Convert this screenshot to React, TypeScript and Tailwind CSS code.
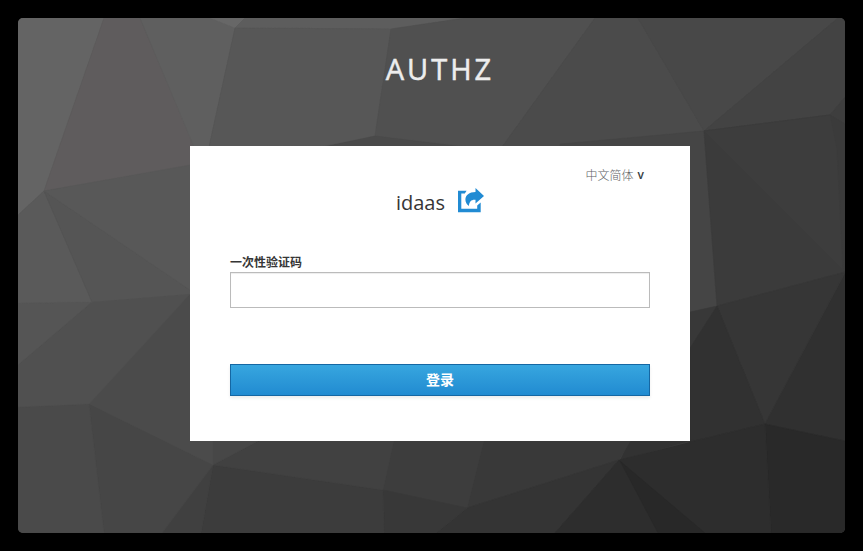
const facets: [string, string][] = [
  ["18,18 104,18 44,191 18,215", "#646464"],
  ["104,18 140,18 194,146 190,166 44,191", "#5f5c5d"],
  ["140,18 210,18 235,28 209,147 194,147", "#5f5f5f"],
  ["210,18 245,18 235,28", "#676767"],
  ["245,18 465,18 391,29 235,28", "#5d5d5d"],
  ["235,28 391,29 375,136 325,146 209,147", "#575757"],
  ["391,29 465,18 595,18 502,147 470,147 375,136", "#505050"],
  ["375,136 460,147 325,147", "#4a4a4a"],
  ["595,18 638,18 704,131 560,147 502,147", "#4b4b4b"],
  ["638,18 838,18 704,131", "#484848"],
  ["838,18 845,18 845,97 830,115 704,131", "#434343"],
  ["845,97 845,124 830,115", "#3e3e3e"],
  ["560,147 560,144 704,131 717,306 690,312 690,147", "#454545"],
  ["704,131 830,115 845,124 845,272 717,306", "#3b3b3b"],
  ["704,131 830,115 837,150 843,270", "#3d3d3d"],
  ["690,312 717,306 690,348", "#383838"],
  ["717,306 845,272 765,424", "#363636"],
  ["690,348 717,306 765,424 690,442", "#313131"],
  ["845,273 845,441 765,424", "#303030"],
  ["765,424 845,441 845,533 771,533", "#292929"],
  ["630,440 694,440 620,460", "#323232"],
  ["484,440 631,440 619,460 467,508", "#393939"],
  ["467,508 619,460 555,533 436,533", "#343434"],
  ["619,460 690,442 765,424 771,533 555,533", "#2d2d2d"],
  ["620,461 705,533 658,533", "#282828"],
  ["394,440 484,440 467,508 383,490", "#3d3d3d"],
  ["383,490 467,508 436,533 384,533", "#383838"],
  ["213,465 383,490 384,533 201,533", "#3c3c3c"],
  ["213,465 260,440 394,440 383,490", "#414141"],
  ["213,465 201,533 162,533", "#404040"],
  ["190,440 260,440 213,465", "#474747"],
  ["89,404 213,465 162,533 104,533", "#464646"],
  ["18,407 89,404 104,533 18,533", "#4a4a4a"],
  ["89,404 118,370 190,294 213,440 213,465", "#4b4b4b"],
  ["92,302 190,294 89,404 18,407 18,365", "#505050"],
  ["18,303 92,302 18,365", "#555555"],
  ["18,215 44,191 92,302 18,303", "#5a5a5a"],
  ["44,191 190,290 190,294 92,302", "#555555"],
  ["44,191 190,165 190,290", "#585858"],
];

function Backdrop() {
  return (
    <svg className="absolute inset-0 h-full w-full" viewBox="18 18 827 515" aria-hidden="true">
      {facets.map(([points, fill]) => (
        <polygon key={points} points={points} fill={fill} stroke={fill} strokeWidth="0.5" />
      ))}
    </svg>
  );
}

function ShareIcon() {
  return (
    <svg className="h-[25px] w-[26px]" viewBox="0 0 26 25" fill="#218bd3" aria-hidden="true">
      <path d="M0 2.8H8.6L6.8 5.6H3.3V20.8H19.2V17.4L22.7 14.4V24.2H0Z" />
      <path d="M17.5 0 26 7.9 17.5 15.6V11.7C13.5 11.3 11.3 13.2 10.9 18 8.8 16.4 7.4 14.1 7.4 11.7 7.4 7.3 11.2 4.1 17.5 4.1Z" />
    </svg>
  );
}

export default function App() {
  return (
    <div className="h-[551px] w-[863px] bg-black p-[18px] font-['Open_Sans','Noto_Sans_CJK_SC',sans-serif]">
      <main className="relative h-[515px] overflow-hidden rounded-[5px] bg-[#484848]">
        <Backdrop />
        <div className="relative flex flex-col pl-[172px]">
          <h1 className="flex h-32 w-[500px] justify-center pt-[31px] text-[29px] leading-[40px] tracking-[3px] text-[#ededed] [-webkit-text-stroke:0.5px_#ededed]">
            AUTHZ
          </h1>
          <section className="flex h-[295px] w-[500px] flex-col bg-white px-10 pt-[19px]">
            <button className="mr-1.5 flex h-[19px] items-center gap-1 self-end text-[12px] font-light text-[#5d6064]">
              <span className="pt-px font-['Noto_Sans_CJK_SC',sans-serif]">中文简体</span>
              <span className="font-['Open_Sans'] font-semibold text-[#393f44]">v</span>
            </button>
            <header className="flex h-[68px] items-start justify-center gap-[13px] pt-1">
              <span className="pt-px text-[20px] leading-[28px] text-[#363636]">idaas</span>
              <ShareIcon />
            </header>
            <label htmlFor="otp" className="mb-px flex h-[19px] items-center font-['Noto_Sans_CJK_SC',sans-serif] text-[12px] font-bold text-[#363636]">
              一次性验证码
            </label>
            <input
              id="otp"
              className="h-9 w-full border border-[#bbb] bg-white px-2 shadow-[inset_0_1px_1px_rgba(3,3,3,0.075)] outline-none"
            />
            <button className="mt-14 h-8 w-full border border-[#1567a3] bg-linear-to-b from-[#37a6df] to-[#218bd1] pb-0.5 font-['Noto_Sans_CJK_SC',sans-serif] text-[14px] leading-[28px] font-bold text-white shadow-[0_2px_3px_rgba(3,3,3,0.08)]">
              登录
            </button>
          </section>
        </div>
      </main>
    </div>
  );
}
